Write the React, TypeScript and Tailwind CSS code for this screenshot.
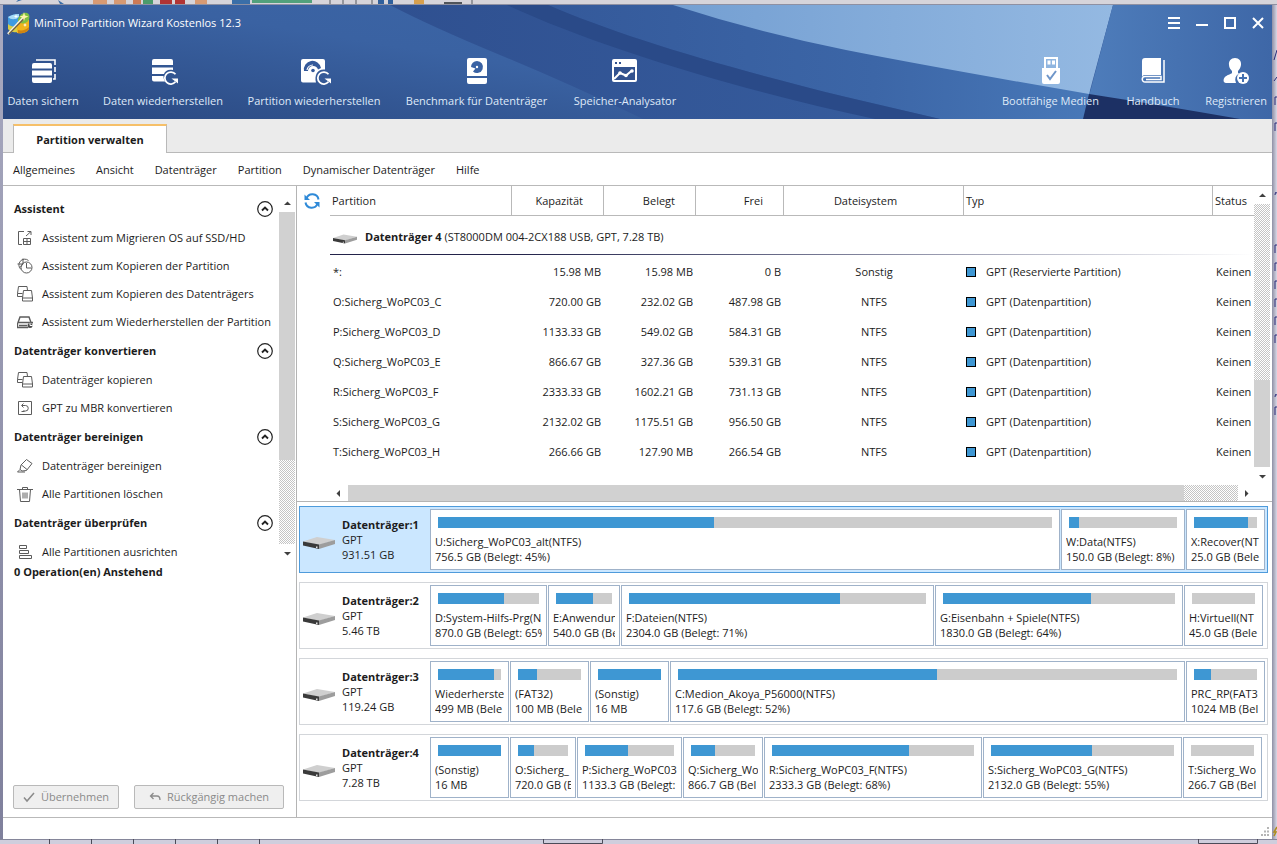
import { useState, type ReactNode } from 'react';

const CHECKER = 'bg-[repeating-conic-gradient(#c4c4c4_0_25%,#ffffff_0_50%)] bg-[length:2px_2px]';

type Volume = { name: string; info: string; weight: number; used: number };
type Disk = { name: string; style: string; size: string; end: string; volumes: Volume[] };

const partitions = [
  { name: '*:', capacity: '15.98 MB', used: '15.98 MB', free: '0 B', fs: 'Sonstig', type: 'GPT (Reservierte Partition)' },
  { name: 'O:Sicherg_WoPC03_C', capacity: '720.00 GB', used: '232.02 GB', free: '487.98 GB', fs: 'NTFS', type: 'GPT (Datenpartition)' },
  { name: 'P:Sicherg_WoPC03_D', capacity: '1133.33 GB', used: '549.02 GB', free: '584.31 GB', fs: 'NTFS', type: 'GPT (Datenpartition)' },
  { name: 'Q:Sicherg_WoPC03_E', capacity: '866.67 GB', used: '327.36 GB', free: '539.31 GB', fs: 'NTFS', type: 'GPT (Datenpartition)' },
  { name: 'R:Sicherg_WoPC03_F', capacity: '2333.33 GB', used: '1602.21 GB', free: '731.13 GB', fs: 'NTFS', type: 'GPT (Datenpartition)' },
  { name: 'S:Sicherg_WoPC03_G', capacity: '2132.02 GB', used: '1175.51 GB', free: '956.50 GB', fs: 'NTFS', type: 'GPT (Datenpartition)' },
  { name: 'T:Sicherg_WoPC03_H', capacity: '266.66 GB', used: '127.90 MB', free: '266.54 GB', fs: 'NTFS', type: 'GPT (Datenpartition)' },
];

const disks: Disk[] = [
  {
    name: 'Datenträger:1', style: 'GPT', size: '931.51 GB', end: 'pr-0.5',
    volumes: [
      { name: 'U:Sicherg_WoPC03_alt(NTFS)', info: '756.5 GB (Belegt: 45%)', weight: 630, used: 45 },
      { name: 'W:Data(NTFS)', info: '150.0 GB (Belegt: 8%)', weight: 124, used: 9 },
      { name: 'X:Recover(NT', info: '25.0 GB (Bele', weight: 79, used: 86 },
    ],
  },
  {
    name: 'Datenträger:2', style: 'GPT', size: '5.46 TB', end: 'pr-1',
    volumes: [
      { name: 'D:System-Hilfs-Prg(N', info: '870.0 GB (Belegt: 65%', weight: 117, used: 65 },
      { name: 'E:Anwendun', info: '540.0 GB (Be', weight: 72, used: 66 },
      { name: 'F:Dateien(NTFS)', info: '2304.0 GB (Belegt: 71%)', weight: 313, used: 71 },
      { name: 'G:Eisenbahn + Spiele(NTFS)', info: '1830.0 GB (Belegt: 64%)', weight: 248, used: 64 },
      { name: 'H:Virtuell(NT', info: '45.0 GB (Bele', weight: 79, used: 0 },
    ],
  },
  {
    name: 'Datenträger:3', style: 'GPT', size: '119.24 GB', end: 'pr-0.5',
    volumes: [
      { name: 'Wiederherste', info: '499 MB (Bele', weight: 79, used: 89 },
      { name: '(FAT32)', info: '100 MB (Bele', weight: 79, used: 30 },
      { name: '(Sonstig)', info: '16 MB', weight: 79, used: 100 },
      { name: 'C:Medion_Akoya_P56000(NTFS)', info: '117.6 GB (Belegt: 52%)', weight: 515, used: 52 },
      { name: 'PRC_RP(FAT3', info: '1024 MB (Bel', weight: 79, used: 27 },
    ],
  },
  {
    name: 'Datenträger:4', style: 'GPT', size: '7.28 TB', end: 'pr-[5px]',
    volumes: [
      { name: '(Sonstig)', info: '16 MB', weight: 79, used: 100 },
      { name: 'O:Sicherg_', info: '720.0 GB (B', weight: 66, used: 32 },
      { name: 'P:Sicherg_WoPC03', info: '1133.3 GB (Belegt:', weight: 105, used: 48 },
      { name: 'Q:Sicherg_Wo', info: '866.7 GB (Bel', weight: 80, used: 38 },
      { name: 'R:Sicherg_WoPC03_F(NTFS)', info: '2333.3 GB (Belegt: 68%)', weight: 218, used: 68 },
      { name: 'S:Sicherg_WoPC03_G(NTFS)', info: '2132.0 GB (Belegt: 55%)', weight: 199, used: 55 },
      { name: 'T:Sicherg_Wo', info: '266.7 GB (Bel', weight: 79, used: 0 },
    ],
  },
];

function Line({ children }: { children: ReactNode }) {
  return (
    <svg className="size-4 shrink-0" viewBox="0 0 16 16" fill="none" stroke="#5c5c5c" aria-hidden="true">
      {children}
    </svg>
  );
}

const copyDiskIcon = (
  <Line>
    <path d="M5.5 10.5H.5v-3l1-7H10l.5 4M.5 7.5h5M6.500 4.500h8l1 7.500v3h-10v-3zM5.500 12h10" />
  </Line>
);

const sections = [
  {
    title: 'Assistent',
    items: [
      {
        label: 'Assistent zum Migrieren OS auf SSD/HD',
        icon: (
          <Line>
            <path d="M7 1.5H1.5v13H5M9 6l5-4.500M10.500 1.500H14V5M6.500 8.500h7v6h-7zM6.500 11.500h7M10 8.500v6" />
          </Line>
        ),
      },
      {
        label: 'Assistent zum Kopieren der Partition',
        icon: (
          <Line>
            <path d="M4 11.500A5.500 5.500 0 1 1 11.500 2.500M6 .5v5.500H.5M6 6 3 9.500" />
            <circle cx="9.5" cy="9.5" r="5.5" />
            <path d="M9.5 5v5h5" />
          </Line>
        ),
      },
      { label: 'Assistent zum Kopieren des Datenträgers', icon: copyDiskIcon },
      {
        label: 'Assistent zum Wiederherstellen der Partition',
        icon: (
          <Line>
            <path d="M1 8.500 3 3h9l2 5.500M.5 8.500h15v1M.5 8.500v5H11M2 11.500h8" strokeWidth="1.4" />
            <circle cx="13" cy="11.5" r="2.5" fill="#4b4b4b" stroke="none" />
            <path d="M13 11.500V8.800M13 11.500h2.700" stroke="#fff" />
          </Line>
        ),
      },
    ],
  },
  {
    title: 'Datenträger konvertieren',
    items: [
      { label: 'Datenträger kopieren', icon: copyDiskIcon },
      {
        label: 'GPT zu MBR konvertieren',
        icon: (
          <Line>
            <path d="M1.500 1.500h13v13h-13z" />
            <path d="M5 5.500h3.500a2.700 2.700 0 0 1 0 5.500H6M6.500 3.500l-2 2 2 2M4.500 11.500h3" />
          </Line>
        ),
      },
    ],
  },
  {
    title: 'Datenträger bereinigen',
    items: [
      {
        label: 'Datenträger bereinigen',
        icon: (
          <Line>
            <path d="m9.500 1.500 5.500 4-5.500 7-4.500.5-2-1.500 1-4.500zM4.500 7l5.500 4.500M3 11.500.5 14H8" />
          </Line>
        ),
      },
      {
        label: 'Alle Partitionen löschen',
        icon: (
          <Line>
            <path d="M0 3.500h16M5.500 3.500v-2h5v2M2.500 3.500l1 12h9l1-12M6 6.500v6M8 6.500v6M10 6.500v6" />
          </Line>
        ),
      },
    ],
  },
  {
    title: 'Datenträger überprüfen',
    items: [
      {
        label: 'Alle Partitionen ausrichten',
        icon: (
          <Line>
            <path d="M2.500 1.500h7v3h-7zM2.500 6.500h9v3h-9zM2.500 11.500h12v3h-12z" />
          </Line>
        ),
      },
    ],
  },
];

const toolsLeft = [
  {
    label: 'Daten sichern',
    width: 'w-[72px]',
    icon: (
      <>
        <path d="M7 2h19v5M26 9v5M26 16v5h-2" stroke="#fff" strokeWidth="1.6" fill="none" />
        <path d="M5 5h16a2 2 0 0 1 2 2v3.500H3V7a2 2 0 0 1 2-2zM3 12.500h20v5H3zM3 19.500h20V23a2 2 0 0 1-2 2H5a2 2 0 0 1-2-2z" />
      </>
    ),
  },
  {
    label: 'Daten wiederherstellen',
    width: 'w-[120px]',
    icon: (
      <>
        <path d="M5 1h17a2 2 0 0 1 2 2v4H3V3a2 2 0 0 1 2-2zM3 9.500h21V12c-5-1-8 1-9 4H3zM3 18h11.500c0 2 .5 4 1.500 5.500H5a2 2 0 0 1-2-2z" />
        <path d="M26.500 16.300a6 6 0 1 0 0 7.500" stroke="#fff" strokeWidth="1.800" fill="none" />
        <path d="M22.500 20.500H29v5z" />
      </>
    ),
  },
  {
    label: 'Partition wiederherstellen',
    width: 'w-[134px]',
    icon: (
      <>
        <path d="M3 1h20a2 2 0 0 1 2 2v8.500c-7-1-11 5-9 13H3a2 2 0 0 1-2-2V3a2 2 0 0 1 2-2z" />
        <path d="M4 13a8.500 8.500 0 0 1 17-3l-3 1.500a5 5 0 0 0-5-3.500 5 5 0 0 0-5 5z" fill="#34599a" />
        <path d="M7 12a6 6 0 0 1 6-5" stroke="#fff" fill="none" strokeWidth="1.200" />
        <circle cx="13" cy="12.500" r="1.800" fill="#34599a" />
        <path d="M28.500 16.300a6 6 0 1 0 0 7.500" stroke="#fff" strokeWidth="1.800" fill="none" />
        <path d="M24.500 20.500H31v5z" />
      </>
    ),
  },
  {
    label: 'Benchmark für Datenträger',
    width: 'w-[143px]',
    icon: (
      <>
        <path d="M6 0h16a2 2 0 0 1 2 2v16H4V2a2 2 0 0 1 2-2zM4 20h20v4a2 2 0 0 1-2 2H6a2 2 0 0 1-2-2z" />
        <path d="M14 3a6 6 0 1 1-4 10.500l2.500-3L8 9a6 6 0 0 1 6-6z" fill="#3a62a3" />
        <circle cx="14" cy="9" r="1.200" />
      </>
    ),
  },
  {
    label: 'Speicher-Analysator',
    width: 'w-[106px]',
    icon: (
      <>
        <path d="M3 1h21a2 2 0 0 1 2 2v19a2 2 0 0 1-2 2H3a2 2 0 0 1-2-2V3a2 2 0 0 1 2-2z" />
        <path d="M3 9h21v13H3z" fill="#32528f" />
        <path d="M4 4h2v2H4zM8 4h2v2H8z" fill="#32528f" />
        <path d="m3 21 6-6 6 2.500 6-5" stroke="#fff" strokeWidth="2" fill="none" />
        <circle cx="9" cy="15" r="1.800" />
        <circle cx="15" cy="17.500" r="1.800" />
        <circle cx="21" cy="13" r="1.800" />
      </>
    ),
  },
];

const toolsRight = [
  {
    label: 'Bootfähige Medien',
    width: 'w-[101px]',
    icon: (
      <>
        <path d="M8 10V0h12v10" stroke="#fff" strokeWidth="2" fill="none" />
        <path d="M10.500 2.500h3v4h-3zM15 2.500h3v4h-3z" />
        <path d="M5 10h18v14a2 2 0 0 1-2 2H7a2 2 0 0 1-2-2z" />
        <path d="m10 17 3 4 6-8" stroke="#6f96c9" strokeWidth="2" fill="none" />
      </>
    ),
  },
  {
    label: 'Handbuch',
    width: 'w-14',
    icon: (
      <>
        <path d="M6 0h16v17H6a3 3 0 0 0-3 2V3a3 3 0 0 1 3-3z" />
        <path d="M25 2v22H6a2.700 2.700 0 0 1 0-5.500h16v3H7" stroke="#fff" strokeWidth="1.500" fill="none" />
      </>
    ),
  },
  {
    label: 'Registrieren',
    width: 'w-[62px]',
    icon: (
      <>
        <path d="M13 0c4 0 6.500 3 6 7-.4 3-2 5-3 6v2l1 .5a7 7 0 0 0-3 9.500H4c-3 0-3-4-1-6 2-2 6-3 7-4v-2c-1-1-3-3-3-6-.5-4 2-7 6-7z" />
        <circle cx="21" cy="20" r="6" />
        <path d="M21 16v8M17 20h8" stroke="#4470b0" strokeWidth="2" />
      </>
    ),
  },
];

function ToolButton({ tool }: { tool: (typeof toolsLeft)[number] }) {
  return (
    <button className={`flex flex-col items-center gap-[7px] leading-4 text-[#dfe9f8] ${tool.width}`}>
      <svg className="h-7 w-7 overflow-visible" viewBox="0 0 28 28" fill="#fff" aria-hidden="true">
        {tool.icon}
      </svg>
      <span className="whitespace-nowrap">{tool.label}</span>
    </button>
  );
}

function HeaderBackdrop() {
  return (
    <svg className="absolute inset-0 h-full w-full" viewBox="3 5 1269 114" preserveAspectRatio="none" aria-hidden="true">
      <defs>
        <linearGradient id="base" x1="0" y1="1" x2="1" y2="0">
          <stop offset="0" stopColor="#29477f" />
          <stop offset="0.6" stopColor="#3a62a2" />
          <stop offset="1" stopColor="#3b65a6" />
        </linearGradient>
        <linearGradient id="deep" x1="0" y1="0" x2="1" y2="0">
          <stop offset="0" stopColor="#2f5090" />
          <stop offset="1" stopColor="#365c9d" />
        </linearGradient>
        <linearGradient id="mid" x1="0" y1="0" x2="1" y2="0">
          <stop offset="0" stopColor="#34599a" />
          <stop offset="0.6" stopColor="#3c66a7" />
          <stop offset="1" stopColor="#4878b8" />
        </linearGradient>
        <linearGradient id="sky" x1="0" y1="0" x2="1" y2="0">
          <stop offset="0" stopColor="#749fd2" />
          <stop offset="1" stopColor="#94b9e2" />
        </linearGradient>
        <linearGradient id="side" x1="0" y1="0" x2="1" y2="0">
          <stop offset="0" stopColor="#4e7dbb" />
          <stop offset="1" stopColor="#3e67a7" />
        </linearGradient>
      </defs>
      <path d="M3 5h700v114H3z" fill="url(#base)" />
      <path d="M390 5Q430 26 500 55T643 119H900V5z" fill="url(#deep)" />
      <path d="M548 5C620 36 720 66 846 97L940 119H1090V5z" fill="url(#mid)" />
      <path d="M507 5H548C620 36 720 66 846 97L940 119H875C740 90 600 48 507 5z" fill="#2a4a88" />
      <path d="M673 5Q760 33 846 50T1089 94L1113 5z" fill="url(#sky)" />
      <path d="M1113 5H1272V119H1083z" fill="url(#side)" />
      <path d="M1089 94Q1160 105 1240 119H1083z" fill="#1c3064" />
    </svg>
  );
}

function DiskIcon({ className }: { className: string }) {
  return (
    <svg className={className} viewBox="0 0 32 12" aria-hidden="true">
      <path d="M0 4.500 14 0l18 3-16 5z" fill="#cfcfcf" />
      <path d="M0 4.500 16 7.500V12L0 8.500z" fill="#3a3a3a" />
      <path d="M16 7.500 32 3v4l-16 5z" fill="#9d9d9d" />
      <path d="M13 9.500h1.500v1.500H13z" fill="#e5e5e5" />
    </svg>
  );
}

function AppLogo() {
  return (
    <svg className="h-6 w-6" viewBox="0 0 24 24" aria-hidden="true">
      <path d="M1 6c3-2 7-3 11-3l-1 13c-4 1-8 0-10-2z" fill="#3f9be0" />
      <path d="M1 6c3-2 7-3 11-3v3C8 9 4 9 1 6z" fill="#a8dcf7" />
      <path d="M1 13c3 3 7 3 10 2v6c-4 1-9-1-10-3z" fill="#d9cf45" />
      <path d="M10 11c4 1 9 0 12-3v10c-2 4-8 5-12 4z" fill="#f0b51d" />
      <path d="M11 19c4 1 8 0 11-3v2c-2 4-8 5-11 4z" fill="#cf8412" />
      <path d="M11 8c2-5 6-7 9-6s3 5 1 8-7 3-10 1z" fill="#7fc043" />
      <path d="M1 23 17 6" stroke="#f7f3df" strokeWidth="2.500" />
      <path d="m2 23 15.500-16" stroke="#6d5c3d" strokeWidth="1.200" />
      <path d="m17 1 1 3.500 3.500 1L18 7l-1 3-1-3-3.500-1.500L16 4.500z" fill="#fff6a8" />
      <path d="m9 3 .6 1.900 1.900.6-1.900.6L9 8l-.6-1.900-1.900-.6 1.900-.6zM18 12l.6 1.400 1.400.6-1.400.6L18 16l-.6-1.400L16 14l1.400-.6z" fill="#fff" />
    </svg>
  );
}

function Arrow({ label, dir }: { label: string; dir: 'up' | 'down' | 'left' | 'right' }) {
  const shapes = {
    up: 'M1 6 4.500 2.500 8 6z',
    down: 'M1 3 4.500 6.500 8 3z',
    left: 'M6 1 2.500 4.500 6 8z',
    right: 'M3 1l3.500 3.500L3 8z',
  };
  return (
    <button aria-label={label} className="flex h-[18px] w-4 shrink-0 items-center justify-center">
      <svg className="size-[9px]" viewBox="0 0 9 9" fill="#404040" aria-hidden="true">
        <path d={shapes[dir]} />
      </svg>
    </button>
  );
}

function Sidebar() {
  const [closed, setClosed] = useState<string[]>([]);

  const toggle = (title: string) => {
    setClosed(closed.includes(title) ? closed.filter((t) => t !== title) : [...closed, title]);
  };

  return (
    <aside className="flex w-[294px] shrink-0 flex-col border-r border-[#b4b4b4] pt-2">
      <div className="flex h-[368px] overflow-hidden">
        <div className="min-w-0 flex-1">
          {sections.map((section) => (
            <section key={section.title}>
              <div className="flex h-[30px] items-center justify-between pr-1.5 pl-[11px]">
                <h2 className="font-bold">{section.title}</h2>
                <button aria-label={`${section.title} umschalten`} onClick={() => toggle(section.title)}>
                  <svg className="size-4" viewBox="0 0 16 16" fill="none" stroke="#222" aria-hidden="true">
                    <circle cx="8" cy="8" r="7.300" strokeWidth="1.200" />
                    <path d="m5 9.500 3-3 3 3" strokeWidth="1.900" />
                  </svg>
                </button>
              </div>
              {!closed.includes(section.title) &&
                section.items.map((item) => (
                  <button key={item.label} className="flex h-7 w-full items-center gap-[9px] pl-3.5 whitespace-nowrap">
                    {item.icon}
                    {item.label}
                  </button>
                ))}
            </section>
          ))}
        </div>
        <div className="mr-px flex w-4 flex-col">
          <Arrow dir="up" label="Nach oben" />
          <div className="h-[248px] bg-[#d1d1d1]" />
          <div className={`flex-1 ${CHECKER}`} />
          <Arrow dir="down" label="Nach unten" />
        </div>
      </div>
      <p className="flex h-5 items-center pl-[11px] font-bold">0 Operation(en) Anstehend</p>
      <div className="mt-auto flex gap-[15px] pb-2 pl-2.5 text-[#8a8a8a]">
        <button disabled className="flex h-6 w-[106px] items-center justify-center gap-1.5 rounded-xs border border-[#b9b9b9] bg-[#efefef]">
          <svg className="h-3 w-3" viewBox="0 0 12 12" fill="none" stroke="#8a8a8a" strokeWidth="1.500" aria-hidden="true">
            <path d="m1 6.500 3 3.500 7-8" />
          </svg>
          Übernehmen
        </button>
        <button disabled className="flex h-6 w-[150px] items-center justify-center gap-1.5 rounded-xs border border-[#b9b9b9] bg-[#efefef]">
          <svg className="h-3 w-3" viewBox="0 0 12 12" fill="none" stroke="#8a8a8a" strokeWidth="1.300" aria-hidden="true">
            <path d="M4.500 2 1.500 5l3 3M1.500 5H8c2 0 3 1.500 3 4" />
          </svg>
          Rückgängig machen
        </button>
      </div>
    </aside>
  );
}

function PartitionTable() {
  const head = 'border-r border-b border-[#b9b9b9] font-normal';
  return (
    <div className="border-b border-[#b4b4b4] pr-0.5">
      <div className="flex">
        <div className="w-[33px] shrink-0 pt-[7px] pl-[7px]">
          <button aria-label="Aktualisieren" className="block">
            <svg className="size-4" viewBox="0 0 16 16" fill="none" stroke="#2f8ad8" strokeWidth="2" aria-hidden="true">
              <path d="M2.500 5.500a6.200 6.200 0 0 1 12 1M13.500 10.500a6.200 6.200 0 0 1-12-1" />
              <path d="M.5 1.500V7H6zM15.500 14.500V9H10z" fill="#2f8ad8" stroke="none" />
            </svg>
          </button>
        </div>
        <table className="w-full flex-1 table-fixed border-separate border-spacing-0 self-start">
          <colgroup>
            <col className="w-[182px]" />
            <col className="w-[92px]" />
            <col className="w-[92px]" />
            <col className="w-[88px]" />
            <col className="w-[180px]" />
            <col />
            <col className="w-[41px]" />
          </colgroup>
          <thead>
            <tr className="h-[30px]">
              <th className={`${head} pl-0.5 text-left`}>Partition</th>
              <th className={`${head} pr-5 text-right`}>Kapazität</th>
              <th className={`${head} pr-5 text-right`}>Belegt</th>
              <th className={`${head} pr-5 text-right`}>Frei</th>
              <th className={`${head} pr-4 text-center`}>Dateisystem</th>
              <th className={`${head} pl-0.5 text-left`}>Typ</th>
              <th className="border-b border-[#b9b9b9] pl-0.5 text-left font-normal">Status</th>
            </tr>
          </thead>
          <tbody>
            <tr className="h-[41px]">
              <td colSpan={7}>
                <div className="flex h-[38px] items-center gap-2 pt-1 pl-[3px]">
                  <DiskIcon className="mt-1 h-[10px] w-6" />
                  <span>
                    <b>Datenträger 4</b> (ST8000DM 004-2CX188 USB, GPT, 7.28 TB)
                  </span>
                </div>
                <div className="mb-0.5 h-px bg-linear-to-r from-[#23234a] from-20% to-white" />
              </td>
            </tr>
            {partitions.map((p) => (
              <tr key={p.name} className="h-[30px]">
                <td className="pl-[3px]">{p.name}</td>
                <td className="pr-[3px] text-right">{p.capacity}</td>
                <td className="pr-[3px] text-right">{p.used}</td>
                <td className="pr-[3px] text-right">{p.free}</td>
                <td className="text-center">{p.fs}</td>
                <td className="pl-0.5">
                  <span className="flex items-center gap-2.5">
                    <span className="size-2.5 border border-black bg-[#3e97d3]" />
                    {p.type}
                  </span>
                </td>
                <td className="pl-[3px]">Keinen</td>
              </tr>
            ))}
          </tbody>
        </table>
        <div className="flex h-[299px] w-4 shrink-0 flex-col">
          <Arrow dir="up" label="Tabelle nach oben" />
          <div className={`flex-1 ${CHECKER}`} />
          <div className="h-[87px] bg-[#d1d1d1]" />
          <Arrow dir="down" label="Tabelle nach unten" />
        </div>
      </div>
      <div className="flex h-4 items-center pr-4 pl-[33px]">
        <Arrow dir="left" label="Nach links" />
        <div className="ml-0.5 h-4 flex-1 bg-[#d1d1d1]" />
        <div className={`h-4 w-[54px] ${CHECKER}`} />
        <Arrow dir="right" label="Nach rechts" />
      </div>
    </div>
  );
}

function DiskRow({ disk, selected, onSelect }: { disk: Disk; selected: boolean; onSelect: () => void }) {
  const columns = disk.volumes.map((v) => `minmax(0, ${v.weight}fr)`).join(' ');
  return (
    <div className={`flex border py-0.5 ${disk.end} ${selected ? 'border-[#4e9bdb] bg-[#cbe7ff]' : 'border-[#d3d6da] bg-white'}`}>
      <button onClick={onSelect} className="flex w-[130px] shrink-0 items-center gap-[7px] pl-[3px] text-left leading-[15px]">
        <DiskIcon className="mt-1.5 h-3 w-8 shrink-0" />
        <span className="whitespace-nowrap">
          <b className="block">{disk.name}</b>
          <span className="block">{disk.style}</span>
          <span className="block">{disk.size}</span>
        </span>
      </button>
      <div className="grid min-w-0 flex-1 gap-px" style={{ gridTemplateColumns: columns }}>
        {disk.volumes.map((v) => (
          <button
            key={v.name}
            className="flex h-[61px] flex-col border border-[#9fb2c9] bg-white px-1 pt-[7px] text-left leading-[15px]"
          >
            <span className="mb-1.5 w-full px-[3px]">
              <span className="block h-[11px] bg-[#cccccc]">
                <span className="block h-full bg-[#3e97d3]" style={{ width: `${v.used}%` }} />
              </span>
            </span>
            <span className="w-full overflow-hidden whitespace-nowrap">{v.name}</span>
            <span className="w-full overflow-hidden whitespace-nowrap">{v.info}</span>
          </button>
        ))}
      </div>
    </div>
  );
}

export default function App() {
  const [selected, setSelected] = useState('Datenträger:1');

  return (
    <div className="flex min-h-screen flex-col bg-[#c9c8d8] font-['Open_Sans','Noto_Sans',sans-serif] text-[11px] leading-4 text-[#1c1c1c]">
      <svg className="h-[5px] w-full bg-[#d6d4da]" viewBox="0 0 1277 5" preserveAspectRatio="none" aria-hidden="true">
        <path d="M93 0h14v5H93zM114 0h12v5h-12zM195 0h12v5h-12z" fill="#d79a73" />
        <path d="M133 0h8v5h-8z" fill="#cc7a55" />
        <path d="M143 0h10v4h-10z" fill="#4c9b6c" />
        <path d="M160 0h12v4h-12zM175 0h10v4h-10z" fill="#b13434" />
        <path d="M16 2 22 0h-4zM58 0l6 4h-4zM232 0h18v5h-18z" fill="#3a6ea8" />
        <path d="M252 0h60v3h-60z" fill="#52a17c" />
        <path d="M330 0v5M343 0v5M356 0v5M372 0v5M472 0v5" stroke="#55585e" />
        <path d="M378 0h6v5h-6zM388 0h5v5h-5z" fill="#2f5f9c" />
        <path d="M414 0h10v4h-10z" fill="#d8a04e" />
        <path d="M444 2h18v2h-18z" fill="#50545a" />
        <path d="M0 4.500h1277" stroke="#8e90a2" />
      </svg>
      <div className="flex flex-1">
        <div className="w-[3px] bg-linear-to-b from-[#a9aac0] to-[#7f809c]" />
        <div className="flex min-w-0 flex-1 flex-col bg-white">
          <header className="relative h-[114px] overflow-hidden bg-[#34599a]">
            <HeaderBackdrop />
            <div className="relative flex h-full flex-col">
              <div className="flex h-[35px] items-center justify-between pr-2 pl-1">
                <div className="flex items-center gap-[3px] text-white">
                  <AppLogo />
                  <h1>MiniTool Partition Wizard Kostenlos 12.3</h1>
                </div>
                <div className="flex gap-4">
                  <button aria-label="Menü">
                    <svg className="size-3" viewBox="0 0 12 12" fill="#fff" aria-hidden="true">
                      <path d="M0 0h12v2H0zM0 5h12v2H0zM0 10h12v2H0z" />
                    </svg>
                  </button>
                  <button aria-label="Minimieren">
                    <svg className="size-3" viewBox="0 0 12 12" fill="#fff" aria-hidden="true">
                      <path d="M0 7h12v2H0z" />
                    </svg>
                  </button>
                  <button aria-label="Maximieren">
                    <svg className="size-3" viewBox="0 0 12 12" fill="none" stroke="#fff" strokeWidth="2" aria-hidden="true">
                      <path d="M1 1h10v10H1z" />
                    </svg>
                  </button>
                  <button aria-label="Schließen">
                    <svg className="size-3" viewBox="0 0 12 12" fill="none" stroke="#fff" strokeWidth="2" aria-hidden="true">
                      <path d="m1 1 10 10M11 1 1 11" />
                    </svg>
                  </button>
                </div>
              </div>
              <nav className="flex justify-between pt-[18px] pr-[5px] pl-1">
                <div className="flex gap-6">
                  {toolsLeft.map((tool) => (
                    <ToolButton key={tool.label} tool={tool} />
                  ))}
                </div>
                <div className="flex gap-6">
                  {toolsRight.map((tool) => (
                    <ToolButton key={tool.label} tool={tool} />
                  ))}
                </div>
              </nav>
            </div>
          </header>
          <div className="flex h-[34px] items-end border-b border-[#b9b9b9] bg-[#ebebeb] pl-2.5">
            <button className="-mb-px h-[29px] w-[154px] border-x border-t-2 border-x-[#b9b9b9] border-t-[#f6c069] bg-white font-bold">
              Partition verwalten
            </button>
          </div>
          <nav className="flex h-[33px] items-center gap-[21px] border-b border-[#b9b9b9] pt-0.5 pl-2.5">
            <button>Allgemeines</button>
            <button>Ansicht</button>
            <button>Datenträger</button>
            <button>Partition</button>
            <button>Dynamischer Datenträger</button>
            <button>Hilfe</button>
          </nav>
          <div className="flex flex-1">
            <Sidebar />
            <main className="min-w-0 flex-1">
              <PartitionTable />
              <div className="flex flex-col gap-[9px] py-1 pr-1 pl-0.5">
                {disks.map((disk) => (
                  <DiskRow key={disk.name} disk={disk} selected={selected === disk.name} onSelect={() => setSelected(disk.name)} />
                ))}
              </div>
            </main>
          </div>
          <footer className="flex h-[22px] items-end justify-end border-t border-[#b9b9b9] p-0.5">
            <svg className="size-2.5" viewBox="0 0 10 10" fill="#b5b5b5" aria-hidden="true">
              <path d="M7 0h2v2H7zM4 3.500h2v2H4zM7 3.500h2v2H7zM1 7h2v2H1zM4 7h2v2H4zM7 7h2v2H7z" />
            </svg>
          </footer>
        </div>
        <svg className="w-[5px] bg-linear-to-r from-[#8f90a5] to-[#d9d8e6]" viewBox="0 0 5 834" preserveAspectRatio="none" aria-hidden="true">
          <path d="M2 55 5 45M2 76l3-4M3 100v-8h2M3 126v-8h2M3 190q0-4 2-2M3 248v-8h2M3 266v-8h2M3 284v-8h2M3 302v-8h2M3 320v-8h2M3 338v-8h2M3 392q0-4 2-2M3 410v-8h2" stroke="#2b2b78" fill="none" />
          <path d="m5 822-3 5h2l-2 4" stroke="#b08d1c" strokeWidth="1.500" fill="none" />
        </svg>
      </div>
      <svg className="h-[5px] w-full bg-[#cfcedd]" viewBox="0 0 1277 5" preserveAspectRatio="none" aria-hidden="true">
        <path d="M0 .5h1277" stroke="#85869a" />
        <path d="M49.500 0v5M91.500 0v5M133.500 0v5M175.500 0v5M217.500 0v5M259.500 0v5M543.500 0v4.500h59V0M1198.500 0v4.500h59V0" stroke="#4b4b58" fill="none" />
      </svg>
    </div>
  );
}
